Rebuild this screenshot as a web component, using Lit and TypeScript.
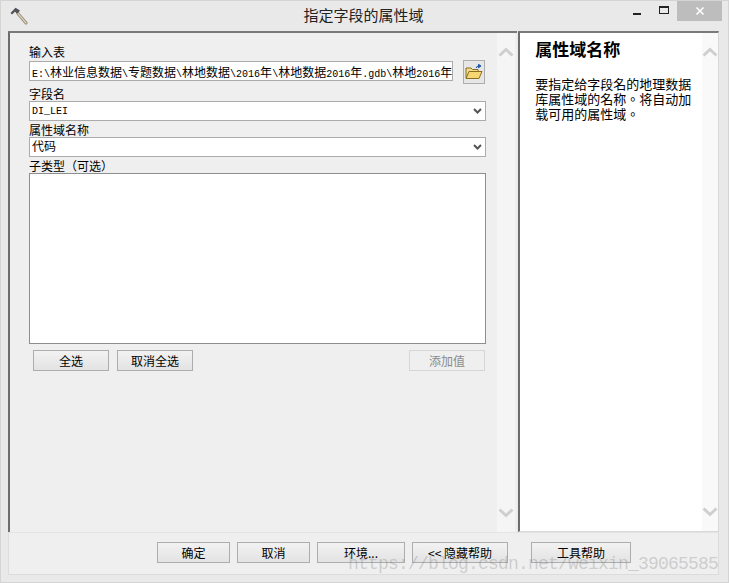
import { LitElement, html, css } from "lit";
import { customElement } from "lit/decorators.js";

const chevUp = html`<svg width="16" height="10" viewBox="0 0 16 10"><path d="M1.5 8.5 L8 2.5 L14.5 8.5" fill="none" stroke="#cfcfcf" stroke-width="3"/></svg>`;
const chevDown = html`<svg width="16" height="10" viewBox="0 0 16 10"><path d="M1.5 1.5 L8 7.5 L14.5 1.5" fill="none" stroke="#cfcfcf" stroke-width="3"/></svg>`;
const selArrow = html`<svg class="arrow" width="9" height="6" viewBox="0 0 9 6"><path d="M1 1 L4.5 4.5 L8 1" fill="none" stroke="#555" stroke-width="2"/></svg>`;

const PATH = "E:\\林业信息数据\\专题数据\\林地数据\\2016年\\林地数据2016年.gdb\\林地2016年";
const runs = (s: string) =>
  s.split(/([\u4e00-\u9fff]+)/).map((r, i) => (i % 2 ? html`<span class="cj">${r}</span>` : r));

@customElement("app-root")
export class AppRoot extends LitElement {
  static styles = css`
    :host { display: block; width: 729px; height: 583px; font-family: "Noto Sans CJK SC", "Liberation Sans", sans-serif; font-size: 12px; color: #000; }
    * { box-sizing: border-box; }
    .win { position: relative; width: 729px; height: 583px; background: #e9e9e9; border: 1px solid #d4d4d4; display: flex; flex-direction: column; overflow: hidden; }
    .title { height: 30px; flex: none; display: flex; align-items: flex-start; padding-left: 9px; }
    .hammer { margin-top: 6px; flex: none; }
    .ttl { flex: 1; text-align: center; font-size: 15px; line-height: 18px; margin-top: 5px; color: #222; padding-left: 76px; }
    .ctrls { display: flex; flex: none; align-items: flex-start; }
    .cb { width: 27px; height: 20px; display: flex; align-items: center; justify-content: center; }
    .cb.close { width: 45px; background: #bdbdbd; margin-right: 6px; }
    .main { height: 501px; flex: none; display: flex; margin: 0 9px 0 7px; }
    .pane { display: flex; background: #efefef; border-left: 2px solid #6d6d6d; border-top: 2px solid #7a7a7a; }
    .left { width: 510px; }
    .right { width: 201px; background: #fff; margin-left: 1px; border-right: 1px solid #d8d8d8; border-bottom: 1px solid #d8d8d8; }
    .body { flex: 1; min-width: 0; display: flex; flex-direction: column; }
    .left .body { padding: 12px 0 0 19px; }
    .scroll { width: 18px; flex: none; background: #f5f5f5; display: flex; flex-direction: column; justify-content: space-between; align-items: center; padding: 14px 0 14px; }
    .left .scroll { margin-right: 2px; }
    .right .scroll { width: 16px; background: #f9f9f9; }
    .lab { height: 14px; line-height: 14px; white-space: nowrap; }
    .row { display: flex; align-items: flex-start; gap: 10px; height: 24px; width: 456px; margin-top: 1px; margin-bottom: 3px; }
    .tf { width: 424px; height: 20px; margin-top: 1px; background: #fff; border: 1px solid #ababab; font-family: "Liberation Mono", "Noto Sans CJK SC", monospace; font-size: 10px; line-height: 20px; padding-left: 2px; white-space: nowrap; overflow: hidden; }
    .cj { font-family: "Noto Sans CJK SC", sans-serif; font-size: 12px; }
    .browse { width: 22px; height: 24px; background: #e6e6e6; border: 1px solid #adadad; display: flex; align-items: center; justify-content: center; flex: none; }
    .sel { position: relative; width: 457px; height: 20px; background: #fff; border: 1px solid #ababab; font-family: "Liberation Mono", "Noto Sans CJK SC", monospace; font-size: 10px; line-height: 17px; padding-left: 2px; display: flex; justify-content: space-between; align-items: center; padding-right: 3px; margin-bottom: 2px; }
    .sel .cj { margin-top: -3px; }
    .list { width: 457px; height: 171px; background: #fff; border: 1px solid #8e8e8e; }
    .btns { display: flex; margin: 6px 0 0 4px; width: 452px; gap: 8px; }
    .btn { height: 21px; background: linear-gradient(#f2f2f2, #e3e3e3); border: 1px solid #adadad; display: flex; align-items: center; justify-content: center; font-size: 12px; white-space: nowrap; flex: none; width: 76px; }
    .btn.dis { background: #efefef; border-color: #d6d6d6; color: #8a8a8a; margin-left: auto; }
    .h { font-weight: 700; font-size: 17px; line-height: 20px; }
    .right .body { padding: 6px 0 0 15px; }
    .p { margin-top: 17px; font-family: "Noto Sans CJK TC", sans-serif; font-size: 13px; line-height: 15px; width: 160px; }
    .foot { flex: 1; margin: 0 9px 7px 7px; background: #efefef; border: 1px solid #dcdcdc; border-top: 1px solid #e4e4e4; display: flex; align-items: flex-start; padding: 9px 0 0 148px; gap: 7px; }
    .w73 { width: 73px; } .w88 { width: 88px; } .w96 { width: 96px; }
    .w100 { width: 100px; margin-left: 16px; }
    .wm { position: absolute; left: 347px; top: 552px; font-family: "Liberation Mono", serif; font-size: 18px; letter-spacing: -0.8px; color: rgba(120,120,120,.3); white-space: nowrap; line-height: 22px; }
  `;

  render() {
    return html`<div class="win">
      <div class="title">
        <svg class="hammer" width="18" height="18" viewBox="0 0 18 18">
          <path d="M7.5 6 L16 16" stroke="#8f8672" stroke-width="3" stroke-linecap="round"/>
          <path d="M7.5 6 L16 16" stroke="#d8cfb8" stroke-width="1.4" stroke-linecap="round"/>
          <path d="M0.5 6 L5.5 0.8 L10 3.5 L7.5 6.5 L5 4.8 L2 7.5 Z" fill="#4f5358"/>
        </svg>
        <div class="ttl">指定字段的属性域</div>
        <div class="ctrls">
          <div class="cb"><svg width="10" height="14" viewBox="0 0 10 14"><rect x="1" y="9" width="8" height="2" fill="#222"/></svg></div>
          <div class="cb"><svg width="12" height="12" viewBox="0 0 12 12"><rect x="1.5" y="1.5" width="9" height="7" fill="none" stroke="#222"/><rect x="1" y="1" width="10" height="2" fill="#222"/></svg></div>
          <div class="cb close"><svg width="10" height="10" viewBox="0 0 10 10"><path d="M1.5 1.5 L8.5 8.5 M8.5 1.5 L1.5 8.5" stroke="#fff" stroke-width="1.6"/></svg></div>
        </div>
      </div>
      <div class="main">
        <div class="pane left">
          <div class="body">
            <div class="lab">输入表</div>
            <div class="row">
              <div class="tf">${runs(PATH)}</div>
              <div class="browse">
                <svg width="18" height="16" viewBox="0 0 18 16">
                  <path d="M1 14 V4 H6 L7.5 5.5 H13 V8" fill="#f2dc8c" stroke="#8a6d1f"/>
                  <path d="M1 14.5 L4 7.5 H17 L14 14.5 Z" fill="#f7d774" stroke="#8a6d1f"/>
                  <path d="M11 4 Q12 1.5 14.5 2 M13.5 0.3 L16 2 L13.5 3.8 Z" fill="#1e5aa8" stroke="#1e5aa8"/>
                </svg>
              </div>
            </div>
            <div class="lab">字段名</div>
            <div class="sel"><span>DI_LEI</span>${selArrow}</div>
            <div class="lab">属性域名称</div>
            <div class="sel"><span class="cj">代码</span>${selArrow}</div>
            <div class="lab">子类型（可选）</div>
            <div class="list"></div>
            <div class="btns">
              <div class="btn">全选</div>
              <div class="btn">取消全选</div>
              <div class="btn dis">添加值</div>
            </div>
          </div>
          <div class="scroll">${chevUp}${chevDown}</div>
        </div>
        <div class="pane right">
          <div class="body">
            <div class="h">属性域名称</div>
            <div class="p">要指定给字段名的地理数据库属性域的名称。将自动加载可用的属性域。</div>
          </div>
          <div class="scroll">${chevUp}${chevDown}</div>
        </div>
      </div>
      <div class="foot">
        <div class="btn w73">确定</div>
        <div class="btn w73">取消</div>
        <div class="btn w88">环境...</div>
        <div class="btn w96">&lt;&lt; 隐藏帮助</div>
        <div class="btn w100">工具帮助</div>
      </div>
      <div class="wm">https://blog.csdn.net/weixin_39065585</div>
    </div>`;
  }
}
